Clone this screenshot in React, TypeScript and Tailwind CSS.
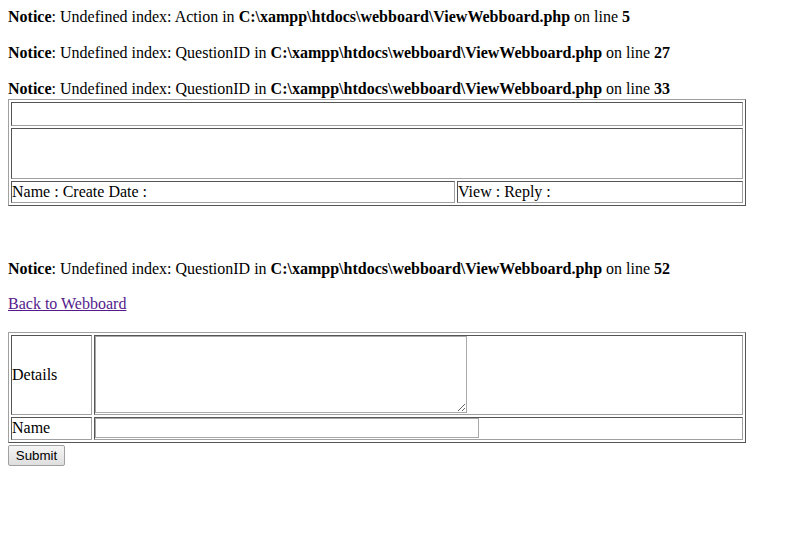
import React from 'react';

const font = { fontFamily: '"Liberation Serif", "Times New Roman", serif' };

function Notice({ name, line }: { name: string; line: number }) {
  return (
    <div className="h-[18px] leading-[18px] whitespace-nowrap">
      <b>Notice</b>: Undefined index: {name} in <b>C:\xampp\htdocs\webboard\ViewWebboard.php</b> on line <b>{line}</b>
    </div>
  );
}

// classic border="1" table look: outset table, inset cells
const tableCls =
  'table-fixed border-separate border-spacing-[2px] border border-t-[#a0a0a0] border-l-[#a0a0a0] border-b-[#555] border-r-[#555]';
const cellCls =
  'p-0 border border-t-[#555] border-l-[#555] border-b-[#a0a0a0] border-r-[#a0a0a0] align-top text-left';

export default function App() {
  return (
    <div className="min-h-screen bg-white text-black text-[16px] p-2" style={font}>
      <Notice name="Action" line={5} />
      <div className="h-[18px]" />
      <Notice name="QuestionID" line={27} />
      <div className="h-[18px]" />
      <Notice name="QuestionID" line={33} />

      <table className={`${tableCls} w-[738px] mt-px`}>
        <colgroup>
          <col className="w-[444px]" />
          <col />
        </colgroup>
        <tbody>
          <tr>
            <td colSpan={2} className={cellCls}>
              <div className="h-[22px]" />
            </td>
          </tr>
          <tr>
            <td colSpan={2} className={cellCls}>
              <div className="h-[49px]" />
            </td>
          </tr>
          <tr>
            <td className={cellCls}>
              <div className="h-[20px] leading-[20px] whitespace-nowrap">Name : Create Date :</div>
            </td>
            <td className={cellCls}>
              <div className="h-[20px] leading-[20px] whitespace-nowrap">View : Reply :</div>
            </td>
          </tr>
        </tbody>
      </table>

      <div className="h-[54px]" />
      <Notice name="QuestionID" line={52} />
      <div className="h-[17px]" />
      <div className="h-[18px] leading-[18px]">
        <a href="#" className="text-[#551a8b] underline">Back to Webboard</a>
      </div>

      <table className={`${tableCls} w-[738px] mt-[19px]`}>
        <colgroup>
          <col className="w-[81px]" />
          <col />
        </colgroup>
        <tbody>
          <tr>
            <td className={cellCls}>
              <div className="h-[78px] flex items-center">Details</div>
            </td>
            <td className={cellCls}>
              <div className="h-[78px]">
                <textarea className="block w-[372px] h-[77px] border border-[#a9a9a9] bg-white resize" />
              </div>
            </td>
          </tr>
          <tr>
            <td className={cellCls}>
              <div className="h-[21px] leading-[20px]">Name</div>
            </td>
            <td className={cellCls}>
              <div className="h-[21px]">
                <input type="text" className="block w-[384px] h-[20px] border border-[#a9a9a9] bg-white" />
              </div>
            </td>
          </tr>
        </tbody>
      </table>

      <button
        className="mt-[2px] block w-[57px] h-[21px] border border-[#a0a0a0] rounded-[2px] bg-gradient-to-b from-[#f6f6f6] to-[#dedede] text-[13.3px] leading-[19px] text-black"
        style={{ fontFamily: '"Liberation Sans", Arial, sans-serif' }}
      >
        Submit
      </button>
    </div>
  );
}
